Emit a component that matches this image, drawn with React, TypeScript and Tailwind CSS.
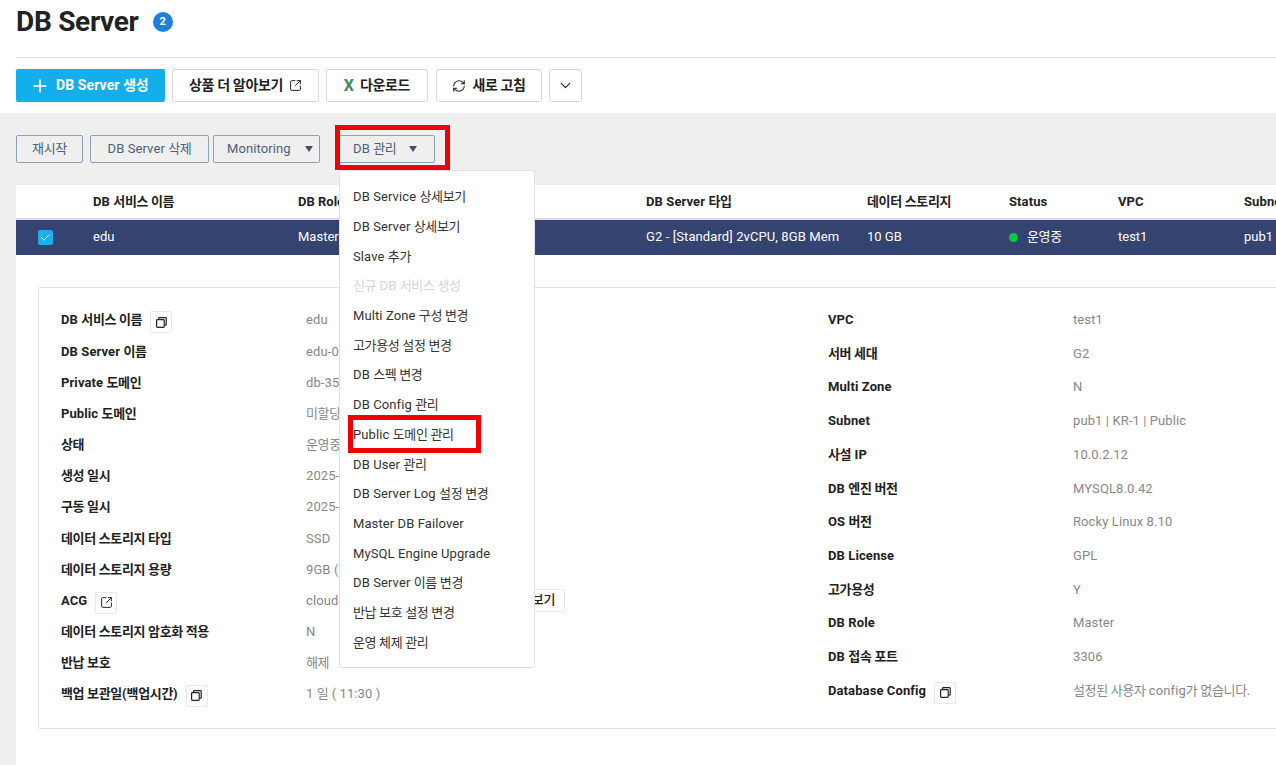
import { ChevronDown, Check, Plus, RefreshCw, SquareArrowOutUpRight } from "lucide-react";
import type { ReactNode } from "react";

// 한글 구간만 자간을 줄인다
function T({ t }: { t: string }) {
  return (
    <>
      {t.split(/([가-힣]+(?: [가-힣]+)*)/).map((part, i) =>
        i % 2 === 1 ? (
          <span key={i} className="tracking-[-0.35px]">
            {part}
          </span>
        ) : (
          <span key={i} className="tracking-[0.1px]">
            {part}
          </span>
        ),
      )}
    </>
  );
}

function CopyIcon() {
  return (
    <svg width="11" height="11" viewBox="0 0 11 11" fill="none" stroke="#222" strokeWidth="1.2">
      <rect x="0.6" y="2.6" width="7.6" height="7.8" rx="0.8" />
      <path d="M2.6 2.4V1.4c0-.5.3-.8.8-.8h6c.5 0 .8.3.8.8v6c0 .5-.3.8-.8.8H8.4" />
    </svg>
  );
}

function IconBox({ children }: { children: ReactNode }) {
  return (
    <span className="ml-[8px] mt-[3px] flex h-[22px] w-[22px] items-center justify-center rounded-[2px] border border-[#e8e8e8] bg-white">
      {children}
    </span>
  );
}

function ToolButton({ children, className }: { children: ReactNode; className: string }) {
  return (
    <button className={`flex h-[33px] items-center justify-center rounded-[2px] border border-[#dcdcdc] bg-white text-[14px] font-bold text-[#222] ${className}`}>
      {children}
    </button>
  );
}

function ActionButton({ children, className }: { children: ReactNode; className: string }) {
  return (
    <button className={`flex h-[28px] items-center rounded-[2px] border border-[#8fa0b5] text-[13px] text-[#4d5f7a] ${className}`}>
      {children}
    </button>
  );
}

function Caret() {
  return <span className="h-0 w-0 border-x-[4px] border-t-[6px] border-x-transparent border-t-[#44546f]" />;
}

const menu = [
  "DB Service 상세보기",
  "DB Server 상세보기",
  "Slave 추가",
  "신규 DB 서비스 생성",
  "Multi Zone 구성 변경",
  "고가용성 설정 변경",
  "DB 스펙 변경",
  "DB Config 관리",
  "Public 도메인 관리",
  "DB User 관리",
  "DB Server Log 설정 변경",
  "Master DB Failover",
  "MySQL Engine Upgrade",
  "DB Server 이름 변경",
  "반납 보호 설정 변경",
  "운영 체제 관리",
];

const left: { label: string; value: string; icon?: "copy" | "link" }[] = [
  { label: "DB 서비스 이름", value: "edu", icon: "copy" },
  { label: "DB Server 이름", value: "edu-001-a1b2" },
  { label: "Private 도메인", value: "db-35abc.vpc-cdb.ntruss.com" },
  { label: "Public 도메인", value: "미할당" },
  { label: "상태", value: "운영중" },
  { label: "생성 일시", value: "2025-06-12 10:21" },
  { label: "구동 일시", value: "2025-06-12 10:34" },
  { label: "데이터 스토리지 타입", value: "SSD" },
  { label: "데이터 스토리지 용량", value: "9GB (10GB)" },
  { label: "ACG", value: "cloud-mysql-acg", icon: "link" },
  { label: "데이터 스토리지 암호화 적용", value: "N" },
  { label: "반납 보호", value: "해제" },
  { label: "백업 보관일(백업시간)", value: "1 일 ( 11:30 )", icon: "copy" },
];

const right: { label: string; value: string; icon?: boolean }[] = [
  { label: "VPC", value: "test1" },
  { label: "서버 세대", value: "G2" },
  { label: "Multi Zone", value: "N" },
  { label: "Subnet", value: "pub1 | KR-1 | Public" },
  { label: "사설 IP", value: "10.0.2.12" },
  { label: "DB 엔진 버전", value: "MYSQL8.0.42" },
  { label: "OS 버전", value: "Rocky Linux 8.10" },
  { label: "DB License", value: "GPL" },
  { label: "고가용성", value: "Y" },
  { label: "DB Role", value: "Master" },
  { label: "DB 접속 포트", value: "3306" },
  { label: "Database Config", value: "설정된 사용자 config가 없습니다.", icon: true },
];

export default function App() {
  return (
    <div className="h-[765px] w-[1276px] overflow-hidden bg-white font-['Roboto','Noto_Sans_CJK_KR',sans-serif] text-[13px]">
      {/* 상단 타이틀 */}
      <div className="ml-[16px] flex h-[58px] items-start border-b border-[#e0e0e0] pt-[6px]">
        <h1 className="text-[28px] leading-[32px] font-bold tracking-[-0.3px] text-[#222]">DB Server</h1>
        <span className="ml-[14px] mt-[6px] flex h-[20px] w-[20px] items-center justify-center rounded-full bg-[#1c80dc] text-[11px] font-bold text-white">
          2
        </span>
      </div>

      {/* 툴바 */}
      <div className="flex h-[55px] items-start gap-[7px] pl-[16px] pt-[11px]">
        <button className="flex h-[33px] w-[149px] items-center gap-[6px] rounded-[2px] bg-[#14aeec] pl-[14px] text-[14px] font-bold text-white">
          <Plus size={20} strokeWidth={2} />
          <span>
            <T t="DB Server 생성" />
          </span>
        </button>
        <ToolButton className="w-[147px] gap-[6px]">
          <span>
            <T t="상품 더 알아보기" />
          </span>
          <SquareArrowOutUpRight size={13} strokeWidth={1.8} />
        </ToolButton>
        <ToolButton className="w-[102px] gap-[6px]">
          <span className="text-[16px] text-[#3f8a5f]">X</span>
          <span>
            <T t="다운로드" />
          </span>
        </ToolButton>
        <ToolButton className="ml-[1px] w-[106px] gap-[6px]">
          <RefreshCw size={14} strokeWidth={1.8} />
          <span>
            <T t="새로 고침" />
          </span>
        </ToolButton>
        <ToolButton className="w-[33px]">
          <ChevronDown size={17} strokeWidth={1.6} />
        </ToolButton>
      </div>

      {/* 본문 */}
      <div className="h-[652px] bg-[#efefef] pl-[16px] pt-[22px]">
        <div className="flex items-start">
          <ActionButton className="w-[67px] justify-center">
            <span>
              <T t="재시작" />
            </span>
          </ActionButton>
          <ActionButton className="ml-[7px] w-[119px] justify-center">
            <span>
              <T t="DB Server 삭제" />
            </span>
          </ActionButton>
          <ActionButton className="ml-[4px] w-[107px] gap-[14px] pl-[13px]">
            <span>
              <T t="Monitoring" />
            </span>
            <Caret />
          </ActionButton>
          <div className="relative ml-[19px]">
            <ActionButton className="w-[96px] gap-[13px] pl-[13px]">
              <span>
                <T t="DB 관리" />
              </span>
              <Caret />
            </ActionButton>
            <div className="pointer-events-none absolute left-[-4px] top-[-10px] h-[45px] w-[115px] border-[5px] border-[#f00000]" />

            {/* 드롭다운 메뉴 */}
            <div className="absolute left-0 top-[35px] z-10 w-[196px] rounded-[2px] border border-[#e2e2e2] bg-white pb-[9px] pt-[11px] text-[#333]">
              {menu.map((item) => (
                <div
                  key={item}
                  className={`relative flex h-[29.73px] items-center pl-[13px] ${item === "신규 DB 서비스 생성" ? "text-[#d5d5d5]" : ""}`}
                >
                  <span>
                    <T t={item} />
                  </span>
                  {item === "Public 도메인 관리" && (
                    <span className="absolute left-[8px] top-[-5px] h-[38px] w-[133px] border-[5px] border-[#f00000]" />
                  )}
                </div>
              ))}
            </div>
          </div>
        </div>

        <div className="mt-[22px] h-[600px] bg-white">
          {/* 테이블 헤더 */}
          <div className="flex h-[35px] items-center border-b-2 border-[#dcdce0] font-bold text-[#222]">
            <span className="ml-[77px] w-[205px] shrink-0">
              <T t="DB 서비스 이름" />
            </span>
            <span className="w-[348px] shrink-0">DB Role</span>
            <span className="w-[221px] shrink-0">
              <T t="DB Server 타입" />
            </span>
            <span className="w-[142px] shrink-0">
              <T t="데이터 스토리지" />
            </span>
            <span className="w-[109px] shrink-0">
              <T t="Status" />
            </span>
            <span className="w-[126px] shrink-0">
              <T t="VPC" />
            </span>
            <span className="whitespace-nowrap">
              <T t="Subnet" />
            </span>
          </div>
          {/* 선택된 행 */}
          <div className="flex h-[35px] items-center bg-[#354370] pb-px text-white">
            <span className="ml-[22px] flex h-[15px] w-[15px] shrink-0 items-center justify-center rounded-[2px] bg-[#1eaef0]">
              <Check size={13} strokeWidth={1.6} />
            </span>
            <span className="ml-[40px] w-[205px] shrink-0">edu</span>
            <span className="w-[348px] shrink-0">Master</span>
            <span className="w-[221px] shrink-0">
              <T t="G2 - [Standard] 2vCPU, 8GB Mem" />
            </span>
            <span className="w-[142px] shrink-0">10 GB</span>
            <span className="flex w-[109px] shrink-0 items-center">
              <span className="h-[9px] w-[9px] rounded-full bg-[#05c83c]" />
              <span className="ml-[9px]">
                <T t="운영중" />
              </span>
            </span>
            <span className="w-[126px] shrink-0">test1</span>
            <span>pub1</span>
          </div>

          {/* 상세 정보 */}
          <div className="ml-[22px] mt-[32px] flex h-[442px] rounded-l-[2px] border border-r-0 border-[#e2e2e2] pl-[22px] pt-[20px]">
            <div className="flex h-[398px] w-[767px] shrink-0 flex-col justify-between">
              {left.map((row) => (
                <div key={row.label} className="flex h-[24px] items-start leading-[24px] first:h-[25px]">
                  <div className="flex w-[245px] shrink-0 items-start font-bold text-[#222]">
                    <span>
                      <T t={row.label} />
                    </span>
                    {row.icon === "copy" && (
                      <IconBox>
                        <CopyIcon />
                      </IconBox>
                    )}
                    {row.icon === "link" && (
                      <IconBox>
                        <SquareArrowOutUpRight size={13} strokeWidth={1.8} color="#222" />
                      </IconBox>
                    )}
                  </div>
                  <div className="w-[199px] shrink-0 truncate text-[#888]">
                    <T t={row.value} />
                  </div>
                  {row.label === "ACG" && (
                    <button className="flex h-[23px] w-[60px] shrink-0 items-center justify-end rounded-[2px] border border-[#e8e8e8] pr-[9px] font-medium text-[#222]">
                      <T t="상세보기" />
                    </button>
                  )}
                </div>
              ))}
            </div>
            <div className="flex h-[395px] flex-col justify-between">
              {right.map((row) => (
                <div key={row.label} className="flex h-[24px] items-start leading-[24px]">
                  <div className="flex w-[245px] shrink-0 items-start font-bold text-[#222]">
                    <span>
                      <T t={row.label} />
                    </span>
                    {row.icon && (
                      <IconBox>
                        <CopyIcon />
                      </IconBox>
                    )}
                  </div>
                  <div className="whitespace-nowrap text-[#888]">
                    <T t={row.value} />
                  </div>
                </div>
              ))}
            </div>
          </div>
        </div>
      </div>
    </div>
  );
}
